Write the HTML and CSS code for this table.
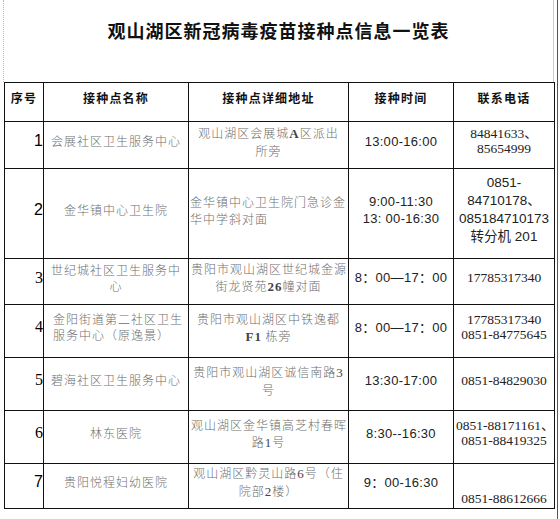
FILE: index.html
```html
<!DOCTYPE html>
<html lang="zh">
<head>
<meta charset="utf-8">
<title>观山湖区新冠病毒疫苗接种点信息一览表</title>
<link rel="stylesheet" href="styles.css">
</head>
<body>
<div class="page">
  <div class="title-box">
    <h1 class="title">观山湖区新冠病毒疫苗接种点信息一览表</h1>
  </div>
  <table class="sheet">
    <colgroup>
      <col class="c-no"><col class="c-name"><col class="c-addr"><col class="c-time"><col class="c-tel">
    </colgroup>
    <thead>
      <tr class="r-head">
        <th>序号</th><th>接种点名称</th><th>接种点详细地址</th><th>接种时间</th><th>联系电话</th>
      </tr>
    </thead>
    <tbody>
      <tr class="r1">
        <td class="no sans">1</td>
        <td class="name">会展社区卫生服务中心</td>
        <td class="addr">观山湖区会展城<b class="lat">A</b>区派出<br>所旁</td>
        <td class="time">13:00-16:00</td>
        <td class="tel serif">84841633、<br>85654999</td>
      </tr>
      <tr class="r2">
        <td class="no sans">2</td>
        <td class="name">金华镇中心卫生院</td>
        <td class="addr left">金华镇中心卫生院门急诊金<br>华中学斜对面</td>
        <td class="time tall">9:00-11:30<br>13: 00-16:30</td>
        <td class="tel sans tel-tall">0851-<br>84710178、<br>085184710173<br>转分机 201</td>
      </tr>
      <tr class="r3">
        <td class="no serif">3</td>
        <td class="name">世纪城社区卫生服务中<br>心</td>
        <td class="addr">贵阳市观山湖区世纪城金源<br>街龙贤苑<b class="lat">26</b>幢对面</td>
        <td class="time">8：00—17：00</td>
        <td class="tel serif">17785317340</td>
      </tr>
      <tr class="r4">
        <td class="no serif">4</td>
        <td class="name left">金阳街道第二社区卫生<br>服务中心（原逸景）</td>
        <td class="addr">贵阳市观山湖区中铁逸都<br><b class="lat">F1</b> 栋旁</td>
        <td class="time">8：00—17：00</td>
        <td class="tel serif">17785317340<br>0851-84775645</td>
      </tr>
      <tr class="r5">
        <td class="no serif">5</td>
        <td class="name">碧海社区卫生服务中心</td>
        <td class="addr">贵阳市观山湖区诚信南路<span class="lat-n">3</span><br>号</td>
        <td class="time">13:30-17:00</td>
        <td class="tel serif">0851-84829030</td>
      </tr>
      <tr class="r6">
        <td class="no serif">6</td>
        <td class="name">林东医院</td>
        <td class="addr">观山湖区金华镇高芝村春晖<br>路<span class="lat-n">1</span>号</td>
        <td class="time">8:30--16:30</td>
        <td class="tel serif">0851-88171161、<br>0851-88419325</td>
      </tr>
      <tr class="r7">
        <td class="no sans">7</td>
        <td class="name">贵阳悦程妇幼医院</td>
        <td class="addr">观山湖区黔灵山路<span class="lat-n">6</span>号（住<br>院部<span class="lat-n">2</span>楼）</td>
        <td class="time">9：00-16:30</td>
        <td class="tel serif bottom">0851-88612666</td>
      </tr>
    </tbody>
  </table>
</div>
</body>
</html>
```
FILE: styles.css
```css
html, body {
  margin: 0;
  padding: 0;
  background: #fff;
}
body {
  width: 560px;
  height: 519px;
  overflow: hidden;
  font-family: "Noto Sans CJK SC", "Liberation Sans", sans-serif;
}
.page {
  width: 557px;
  height: 519px;
  border-right: 1px solid #555;
}
.title-box {
  margin-left: 3px;
  width: 551px;
  height: 82px;
  box-sizing: border-box;
  border-left: 1px dotted #bbb;
  border-right: 1px solid #ccc;
  padding-top: 17px;
}
.title {
  margin: 0;
  text-align: center;
  font-size: 18px;
  line-height: 26px;
  font-weight: 700;
  letter-spacing: 1px;
  color: #111;
  font-family: "Noto Sans CJK SC", serif;
}
.sheet {
  margin-left: 4px;
  border-collapse: collapse;
  table-layout: fixed;
  width: 550px;
}
.c-no { width: 39px; }
.c-name { width: 145px; }
.c-addr { width: 160px; }
.c-time { width: 105px; }
.c-tel { width: 101px; }
.sheet th, .sheet td {
  border: 1px solid #111;
  padding: 0 2px 8px;
  vertical-align: middle;
  text-align: center;
  white-space: nowrap;
  overflow: visible;
}
.sheet th {
  font-size: 12px;
  font-weight: 700;
  letter-spacing: 1.2px;
  color: #111;
  line-height: 16px;
}
.r-head th { height: 30px; }
.r1 td { height: 38px; }
.r2 td { height: 81px; }
.r3 td { height: 37px; }
.r4 td { height: 44px; }
.r5 td { height: 44px; }
.r6 td { height: 44px; }
.r7 td { height: 35px; }

.no {
  text-align: right !important;
  padding-right: 0 !important;
  font-size: 16px;
  color: #000;
}
.sans { font-family: "Liberation Sans", sans-serif; }
.serif { font-family: "Liberation Serif", serif; }
.name {
  font-size: 12px;
  line-height: 16px;
  letter-spacing: 1px;
  color: #6e6e6e;
  font-weight: 300;
}
.name.left { text-align: left !important; padding-left: 9px !important; }
.addr {
  font-size: 12px;
  line-height: 17px;
  letter-spacing: 1px;
  color: #6e6e6e;
  font-weight: 300;
}
.addr.left { text-align: left !important; padding-left: 1px !important; }
.lat {
  font-family: "Liberation Serif", serif;
  font-weight: 700;
  font-size: 13px;
  color: #444;
}
.lat-n {
  font-family: "Liberation Serif", serif;
  font-size: 13px;
  color: #444;
}
.time {
  font-family: "Liberation Sans", "Noto Sans CJK SC", sans-serif;
  font-size: 13px;
  line-height: 17px;
  color: #222;
  letter-spacing: 0.3px;
}
.tel {
  font-size: 13px;
  line-height: 15px;
  color: #222;
}
.tel.sans {
  font-family: "Liberation Sans", "Noto Sans CJK SC", sans-serif;
  font-size: 13.5px;
  line-height: 18px;
}
.tel.serif {
  font-family: "Liberation Serif", "Noto Sans CJK SC", serif;
  font-size: 13.5px;
}
.tel.bottom {
  vertical-align: bottom;
  padding-bottom: 2px;
}
```
